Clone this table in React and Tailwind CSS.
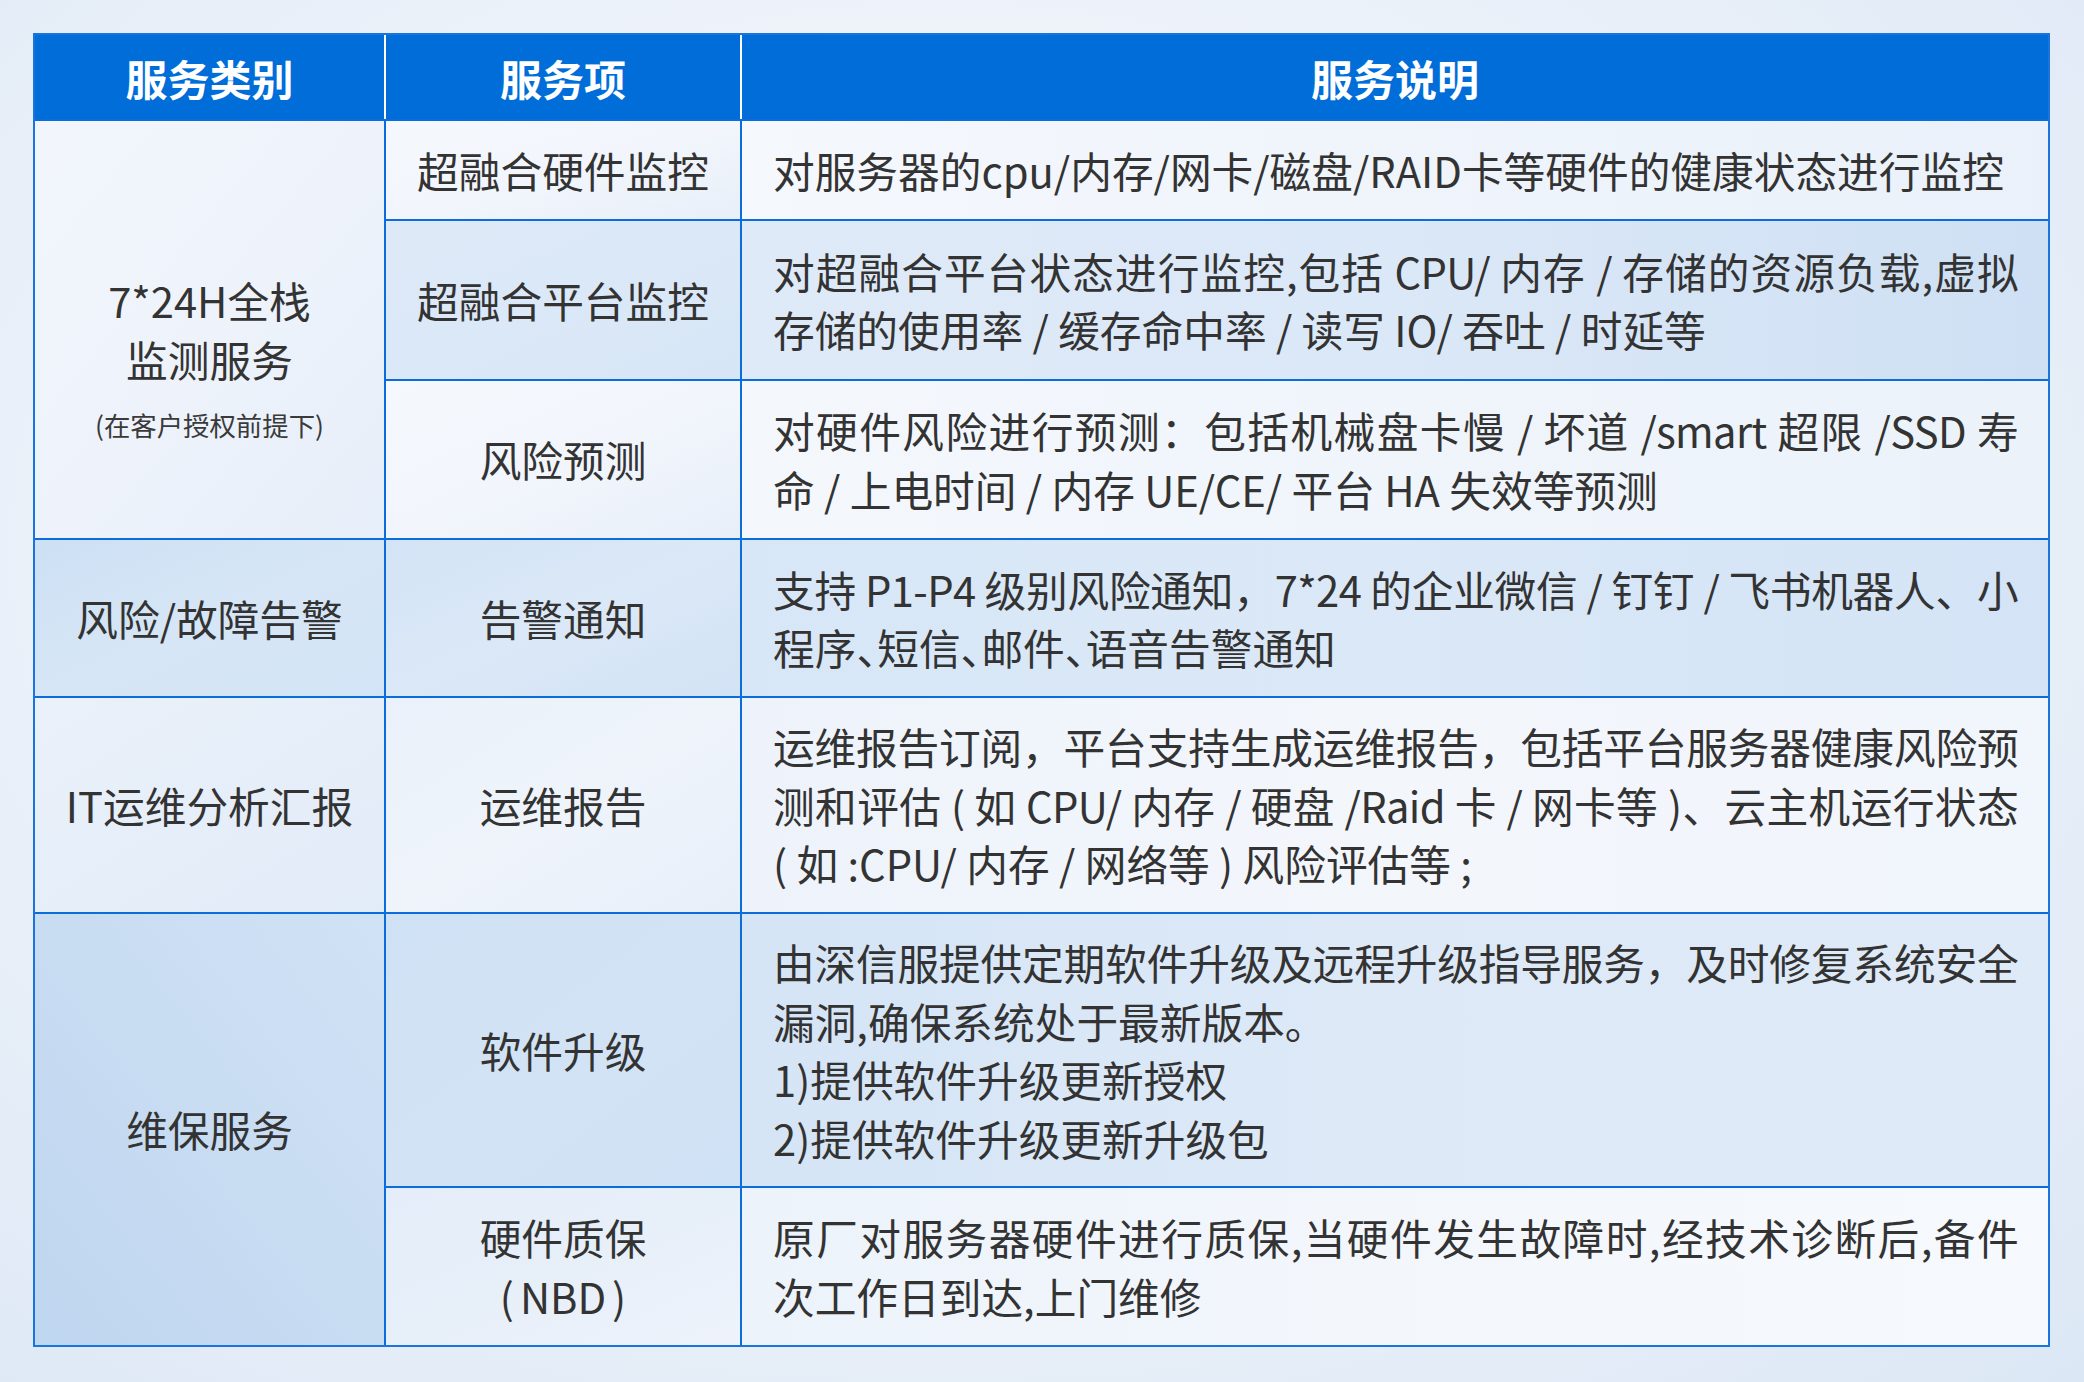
import React from "react";

const FONT = { fontFamily: '"Noto Sans CJK SC", "Noto Sans", sans-serif' };

const LIGHT = "bg-linear-to-br from-[#f5f8fd] via-[#f2f6fc] to-[#e8eff9]";
const BLUE = "bg-linear-to-br from-[#d3e4f6] via-[#dbe8f7] to-[#d2e3f5]";

function Desc({ lines, bg }) {
  return (
    <div className={`flex flex-col justify-center pl-[31px] pr-[30px] text-[41.7px] leading-[58.5px] text-[#333333] ${bg}`}>
      {lines.map((l, i) => (
        <div
          key={i}
          className={
            l.full
              ? "text-justify [text-align-last:justify] tracking-[-0.6px]"
              : "text-left"
          }
        >
          {l.t}
        </div>
      ))}
    </div>
  );
}

function Center({ children, bg, extra = "" }) {
  return (
    <div className={`flex flex-col items-center justify-center text-center text-[41.7px] leading-[58.5px] text-[#333333] ${bg} ${extra}`}>
      {children}
    </div>
  );
}

const Dun = () => <span className="tracking-[-0.5em]">、</span>;

export default function App() {
  return (
    <div
      style={FONT}
      className="w-[2084px] h-[1382px] pt-[33px] pl-[33px] bg-[radial-gradient(ellipse_at_45%_40%,#f6f8fc_0%,#eef3fa_45%,#dce7f5_100%)]"
    >
      <div className="grid w-[2017px] grid-cols-[349px_354px_1306px] grid-rows-[84px_98px_158px_157px_156px_214px_272px_157px] gap-[2px] border-2 border-[#1a74de] bg-[#0b6ddb]">
        {/* header */}
        <div className="flex items-center justify-center bg-[#006dd9] text-[42px] font-bold text-white">
          服务类别
        </div>
        <div className="flex items-center justify-center bg-[#006dd9] text-[42px] font-bold text-white shadow-[-2px_0_0_0_#ffffff]">
          服务项
        </div>
        <div className="flex items-center justify-center bg-[#006dd9] text-[42px] font-bold text-white shadow-[-2px_0_0_0_#ffffff]">
          服务说明
        </div>

        {/* group 1 */}
        <div className="row-span-3 flex items-center justify-center bg-linear-to-br from-[#f2f6fc] via-[#eef3fb] to-[#e6eef9] text-center text-[41.7px] leading-[58.5px] text-[#333333]">
          <div className="relative">
            <div>7*24H全栈</div>
            <div>监测服务</div>
            <div className="absolute left-1/2 top-[138px] -translate-x-1/2 whitespace-nowrap text-[26.4px] leading-[32px] text-[#3a3a3a]">
              (在客户授权前提下)
            </div>
          </div>
        </div>
        <Center bg={LIGHT}>超融合硬件监控</Center>
        <Desc
          bg="bg-linear-to-r from-[#f5f8fd] to-[#eaf1fa]"
          lines={[{ t: "对服务器的cpu/内存/网卡/磁盘/RAID卡等硬件的健康状态进行监控" }]}
        />

        <Center bg="bg-linear-to-br from-[#dde9f7] via-[#dbe8f7] to-[#d6e6f6]">超融合平台监控</Center>
        <Desc
          bg="bg-linear-to-r from-[#dfeaf8] via-[#dbe8f7] to-[#cfe0f4]"
          lines={[
            { t: "对超融合平台状态进行监控,包括 CPU/ 内存 / 存储的资源负载,虚拟", full: true },
            { t: "存储的使用率 / 缓存命中率 / 读写 IO/ 吞吐 / 时延等" },
          ]}
        />

        <Center bg={LIGHT}>风险预测</Center>
        <Desc
          bg="bg-linear-to-r from-[#f4f8fd] to-[#ecf2fa]"
          lines={[
            { t: "对硬件风险进行预测：包括机械盘卡慢 / 坏道 /smart 超限 /SSD 寿", full: true },
            { t: "命 / 上电时间 / 内存 UE/CE/ 平台 HA 失效等预测" },
          ]}
        />

        {/* group 2 */}
        <Center bg="bg-linear-to-br from-[#cde0f4] via-[#d6e6f6] to-[#d3e4f6]">风险/故障告警</Center>
        <Center bg={BLUE}>告警通知</Center>
        <Desc
          bg="bg-linear-to-r from-[#d8e7f7] via-[#dae8f7] to-[#d4e4f6]"
          lines={[
            { t: "支持 P1-P4 级别风险通知，7*24 的企业微信 / 钉钉 / 飞书机器人、小", full: true },
            {
              t: (
                <>
                  程序<Dun />短信<Dun />邮件<Dun />语音告警通知
                </>
              ),
            },
          ]}
        />

        {/* group 3 */}
        <Center bg="bg-linear-to-br from-[#eaf1fa] via-[#e6eef9] to-[#e2ebf8]">IT运维分析汇报</Center>
        <Center bg="bg-linear-to-br from-[#eaf1fa] via-[#eff4fb] to-[#e8eff9]">运维报告</Center>
        <Desc
          bg="bg-linear-to-r from-[#eef3fb] via-[#f3f7fc] to-[#f1f5fc]"
          lines={[
            { t: "运维报告订阅，平台支持生成运维报告，包括平台服务器健康风险预", full: true },
            { t: "测和评估 ( 如 CPU/ 内存 / 硬盘 /Raid 卡 / 网卡等 )、云主机运行状态", full: true },
            { t: "( 如 :CPU/ 内存 / 网络等 ) 风险评估等 ;" },
          ]}
        />

        {/* group 4 */}
        <div className="row-span-2 flex items-center justify-center bg-linear-to-tr from-[#bfd6f0] via-[#c8dcf2] to-[#d0e2f5] text-[41.7px] leading-[58.5px] text-[#333333]">
          维保服务
        </div>
        <Center bg="bg-linear-to-br from-[#cfe1f4] via-[#d2e3f5] to-[#d0e2f5]">软件升级</Center>
        <Desc
          bg="bg-linear-to-r from-[#d5e5f6] via-[#dde9f7] to-[#dfeaf8]"
          lines={[
            { t: "由深信服提供定期软件升级及远程升级指导服务，及时修复系统安全", full: true },
            { t: "漏洞,确保系统处于最新版本。" },
            { t: "1)提供软件升级更新授权" },
            { t: "2)提供软件升级更新升级包" },
          ]}
        />

        <Center bg="bg-linear-to-br from-[#e4edf9] via-[#e7eff9] to-[#eef3fb]">
          <div>硬件质保</div>
          <div>
            (<span className="mx-[6px]">NBD</span>)
          </div>
        </Center>
        <Desc
          bg="bg-linear-to-r from-[#edf3fb] via-[#f3f7fc] to-[#f6f9fd]"
          lines={[
            { t: "原厂对服务器硬件进行质保,当硬件发生故障时,经技术诊断后,备件", full: true },
            { t: "次工作日到达,上门维修" },
          ]}
        />
      </div>
    </div>
  );
}
